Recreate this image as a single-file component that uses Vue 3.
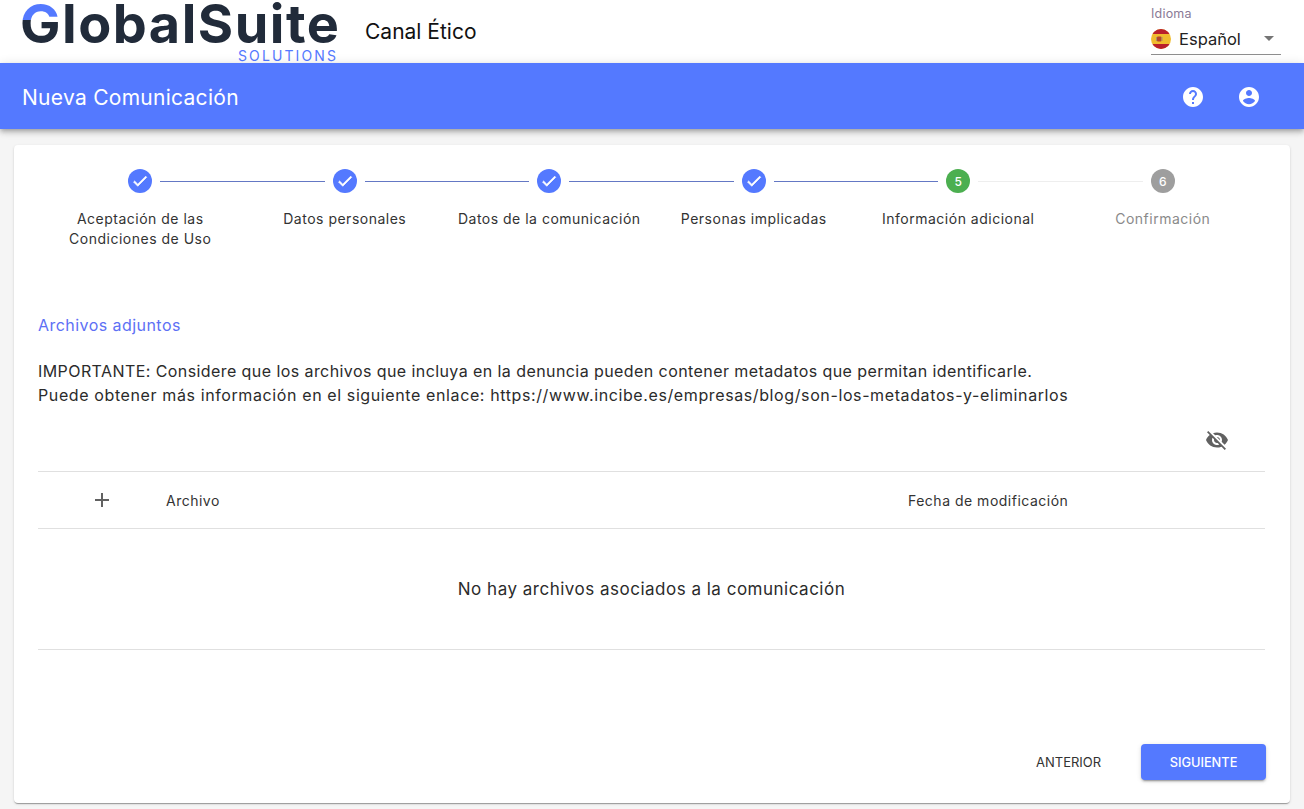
<script setup>
const steps = [
  { label: ['Aceptación de las', 'Condiciones de Uso'], state: 'done' },
  { label: ['Datos personales'], state: 'done' },
  { label: ['Datos de la comunicación'], state: 'done' },
  { label: ['Personas implicadas'], state: 'done' },
  { label: ['Información adicional'], state: 'active', n: 5 },
  { label: ['Confirmación'], state: 'todo', n: 6 },
]
</script>

<template>
  <div class="page">
    <header class="top">
      <div class="logo">
        <div class="logo-main"><span class="logo-g">G</span>lobalSuite</div>
        <div class="logo-sub">SOLUTIONS</div>
      </div>
      <div class="canal">Canal Ético</div>
      <div class="lang">
        <div class="lang-label">Idioma</div>
        <div class="lang-select">
          <svg class="flag" viewBox="0 0 20 20" width="20" height="20">
            <defs><clipPath id="flagclip"><circle cx="10" cy="10" r="10" /></clipPath></defs>
            <g clip-path="url(#flagclip)">
              <rect width="20" height="20" fill="#f0bc2e" />
              <rect width="20" height="5" fill="#b9202c" />
              <rect y="15" width="20" height="5" fill="#b9202c" />
              <rect x="6" y="7.5" width="4.5" height="5" rx="1" fill="#b5452a" />
              <rect x="5" y="8" width="1" height="4" fill="#a8906a" />
              <rect x="10.5" y="8" width="1" height="4" fill="#a8906a" />
            </g>
          </svg>
          <span class="lang-value">Español</span>
          <span class="caret"></span>
        </div>
      </div>
    </header>

    <div class="bar">
      <div class="bar-title">Nueva Comunicación</div>
      <div class="bar-icons">
        <svg viewBox="0 0 24 24" width="24" height="24" fill="#fff"><path d="M12 2C6.48 2 2 6.48 2 12s4.48 10 10 10 10-4.48 10-10S17.52 2 12 2zm1 17h-2v-2h2v2zm2.07-7.75l-.9.92C13.45 12.9 13 13.5 13 15h-2v-.5c0-1.1.45-2.1 1.17-2.83l1.24-1.26c.37-.36.59-.86.59-1.41 0-1.1-.9-2-2-2s-2 .9-2 2H8c0-2.21 1.79-4 4-4s4 1.79 4 4c0 .88-.36 1.68-.93 2.25z" /></svg>
        <svg viewBox="0 0 24 24" width="24" height="24" fill="#fff"><path d="M12 2C6.48 2 2 6.48 2 12s4.48 10 10 10 10-4.48 10-10S17.52 2 12 2zm0 3c1.66 0 3 1.34 3 3s-1.34 3-3 3-3-1.34-3-3 1.34-3 3-3zm0 14.2c-2.5 0-4.71-1.28-6-3.22.03-1.99 4-3.08 6-3.08 1.99 0 5.97 1.09 6 3.08-1.29 1.94-3.5 3.22-6 3.22z" /></svg>
      </div>
    </div>

    <main class="card">
      <div class="stepper">
        <div v-for="(s, i) in steps" :key="i" class="step" :class="s.state">
          <div class="head">
            <div class="dot">
              <svg v-if="s.state === 'done'" viewBox="0 0 24 24" width="18" height="18" fill="#fff" stroke="#fff" stroke-width="0.9"><path d="M9 16.17L4.83 12l-1.42 1.41L9 19 21 7l-1.41-1.41z" /></svg>
              <template v-else>{{ s.n }}</template>
            </div>
            <div v-if="i < steps.length - 1" class="line"></div>
          </div>
          <div class="label">
            <div v-for="l in s.label" :key="l">{{ l }}</div>
          </div>
        </div>
      </div>

      <h2 class="section">Archivos adjuntos</h2>
      <div class="notice">
        <div class="line-one">IMPORTANTE: Considere que los archivos que incluya en la denuncia pueden contener metadatos que permitan identificarle.</div>
        <div class="line-two">Puede obtener más información en el siguiente enlace: https://www.incibe.es/empresas/blog/son-los-metadatos-y-eliminarlos</div>
      </div>

      <div class="tools">
        <svg viewBox="0 0 24 24" width="24" height="24" fill="#616161"><path d="M12 7c2.76 0 5 2.24 5 5 0 .65-.13 1.26-.36 1.83l2.92 2.92c1.51-1.26 2.7-2.89 3.43-4.75-1.73-4.39-6-7.5-11-7.5-1.4 0-2.74.25-3.98.7l2.16 2.16C10.74 7.13 11.35 7 12 7zM2 4.27l2.28 2.28.46.46C3.08 8.3 1.78 10.02 1 12c1.73 4.39 6 7.5 11 7.5 1.55 0 3.03-.3 4.38-.84l.42.42L19.73 22 21 20.73 3.27 3 2 4.27zM7.53 9.8l1.55 1.55c-.05.21-.08.43-.08.65 0 1.66 1.34 3 3 3 .22 0 .44-.03.65-.08l1.55 1.55c-.67.33-1.41.53-2.2.53-2.76 0-5-2.24-5-5 0-.79.2-1.53.53-2.2zm4.31-.78l3.15 3.15.02-.16c0-1.66-1.34-3-3-3l-.17.01z" /></svg>
      </div>

      <div class="table-head">
        <div class="col-add">
          <svg viewBox="0 0 24 24" width="24" height="24" fill="#616161"><path d="M19 13h-6v6h-2v-6H5v-2h6V5h2v6h6v2z" /></svg>
        </div>
        <div class="col-file">Archivo</div>
        <div class="col-date">Fecha de modificación</div>
      </div>
      <div class="empty">No hay archivos asociados a la comunicación</div>

      <div class="actions">
        <button class="btn-text">ANTERIOR</button>
        <button class="btn-primary">SIGUIENTE</button>
      </div>
    </main>
  </div>
</template>

<style>
html, body { margin: 0; background: #f5f5f5; }
</style>

<style scoped>
.page {
  height: 809px;
  display: flex;
  flex-direction: column;
  background: #f5f5f5;
  font-family: Inter, "Open Sans", sans-serif;
  color: #2b2b2b;
  overflow: hidden;
}
.top {
  height: 63px;
  background: #fff;
  display: flex;
  align-items: flex-start;
  padding: 0 23px 0 22px;
  flex: none;
  box-sizing: border-box;
}
.logo { width: 316px; height: 63px; flex: none; padding-top: 1px; box-sizing: border-box; }
.logo-main {
  font-size: 54px;
  font-weight: 700;
  line-height: 46px;
  letter-spacing: 1.5px;
  color: #212b3a;
  white-space: nowrap;
  margin-left: -2px;
}
.logo-g {
  background: linear-gradient(#5479ff 0 45%, #212b3a 45%);
  -webkit-background-clip: text;
  background-clip: text;
  color: transparent;
}
.logo-sub {
  text-align: right;
  font-size: 14px;
  line-height: 16px;
  letter-spacing: 2.1px;
  color: #5479ff;
  margin-top: 1px;
}
.canal {
  margin-left: 27px;
  font-size: 21px;
  line-height: 24px;
  margin-top: 20px;
  color: #111;
}
.lang { margin-left: auto; width: 130px; }
.lang-label {
  font-size: 12.5px;
  line-height: 14px;
  letter-spacing: 0.2px;
  margin-top: 7px;
  color: #8a7a96;
}
.lang-select {
  height: 34px;
  border-bottom: 1px solid #8f8f8f;
  display: flex;
  align-items: center;
  box-sizing: border-box;
  padding-top: 2px;
}
.flag { flex: none; }
.lang-value { margin-left: 8px; font-size: 16.5px; color: #222; }
.caret {
  margin-left: auto;
  margin-right: 7px;
  width: 0;
  height: 0;
  border-left: 5px solid transparent;
  border-right: 5px solid transparent;
  border-top: 5px solid #757575;
}
.bar {
  height: 66px;
  flex: none;
  background: #5479ff;
  color: #fff;
  display: flex;
  align-items: center;
  justify-content: space-between;
  padding: 2px 43px 0 22px;
  box-sizing: border-box;
  box-shadow: 0 2px 4px -1px rgba(0,0,0,.2), 0 4px 5px rgba(0,0,0,.14), 0 1px 10px rgba(0,0,0,.12);
  position: relative;
}
.bar-title { font-size: 21px; letter-spacing: 0.28px; }
.bar-icons { display: flex; gap: 32px; }
.bar-icons svg { display: block; }
.card {
  margin: 16px 14px 0;
  height: 658px;
  flex: none;
  background: #fff;
  border-radius: 4px;
  box-shadow: 0 2px 1px -1px rgba(0,0,0,.2), 0 1px 1px rgba(0,0,0,.14), 0 1px 3px rgba(0,0,0,.12);
  padding: 24px 25px 0 24px;
  box-sizing: border-box;
  display: flex;
  flex-direction: column;
}
.stepper { display: grid; grid-template-columns: repeat(6, 1fr); height: 112px; flex: none; }
.step { display: flex; flex-direction: column; align-items: center; }
.head { position: relative; width: 100%; height: 24px; display: flex; justify-content: center; }
.dot {
  width: 24px;
  height: 24px;
  border-radius: 50%;
  background: #5479ff;
  color: #fff;
  font-size: 12px;
  display: flex;
  align-items: center;
  justify-content: center;
  font-weight: 500;
}
.step.active .dot { background: #4caf50; }
.step.todo .dot { background: #9e9e9e; }
.line {
  position: absolute;
  top: 12px;
  left: calc(50% + 20px);
  right: calc(-50% + 20px);
  height: 1px;
  background: #6478c4;
}
.step.active .line { background: #eee; }
.label {
  margin-top: 16px;
  font-size: 14px;
  letter-spacing: 0.5px;
  line-height: 20px;
  text-align: center;
  color: #333;
}
.step.todo .label { color: #8a8a8a; }
.section {
  margin: 32px 0 0;
  font-size: 16px;
  letter-spacing: 0.45px;
  line-height: 24px;
  font-weight: 400;
  color: #5d70f5;
  height: 24px;
}
.notice {
  margin: 22px 0 0;
  font-size: 16px;
  line-height: 24px;
  color: #2b2b2b;
  white-space: nowrap;
}
.line-one { letter-spacing: 0.42px; }
.line-two { letter-spacing: 0.61px; }
.tools {
  height: 55px;
  margin-top: 9px;
  padding-top: 12px;
  display: flex;
  align-items: flex-start;
  justify-content: flex-end;
  padding-right: 36px;
  box-sizing: border-box;
  flex: none;
}
.tools svg { display: block; }
.table-head {
  height: 58px;
  flex: none;
  box-sizing: border-box;
  border-top: 1px solid #e0e0e0;
  border-bottom: 1px solid #e0e0e0;
  display: flex;
  align-items: center;
  font-size: 14px;
  letter-spacing: 0.5px;
  color: #333;
}
.col-add { width: 128px; display: flex; justify-content: center; }
.col-add svg { display: block; }
.col-file { width: 742px; }
.empty {
  height: 121px;
  flex: none;
  box-sizing: border-box;
  border-bottom: 1px solid #e0e0e0;
  display: flex;
  align-items: center;
  justify-content: center;
  font-size: 17px;
  letter-spacing: 0.5px;
  color: #2b2b2b;
}
.actions {
  margin-top: 94px;
  margin-right: -1px;
  display: flex;
  justify-content: flex-end;
  align-items: center;
}
button { font-family: inherit; border: 0; cursor: pointer; }
.btn-text {
  background: none;
  color: #333;
  font-size: 13px;
  padding: 0;
  width: 65px;
  height: 36px;
  white-space: nowrap;
  margin-right: 40px;
}
.btn-primary {
  width: 125px;
  height: 36px;
  border-radius: 4px;
  background: #5479ff;
  color: #fff;
  font-size: 12.8px;
  font-weight: 500;
  box-shadow: 0 3px 1px -2px rgba(0,0,0,.2), 0 2px 2px rgba(0,0,0,.14), 0 1px 5px rgba(0,0,0,.12);
}
</style>
